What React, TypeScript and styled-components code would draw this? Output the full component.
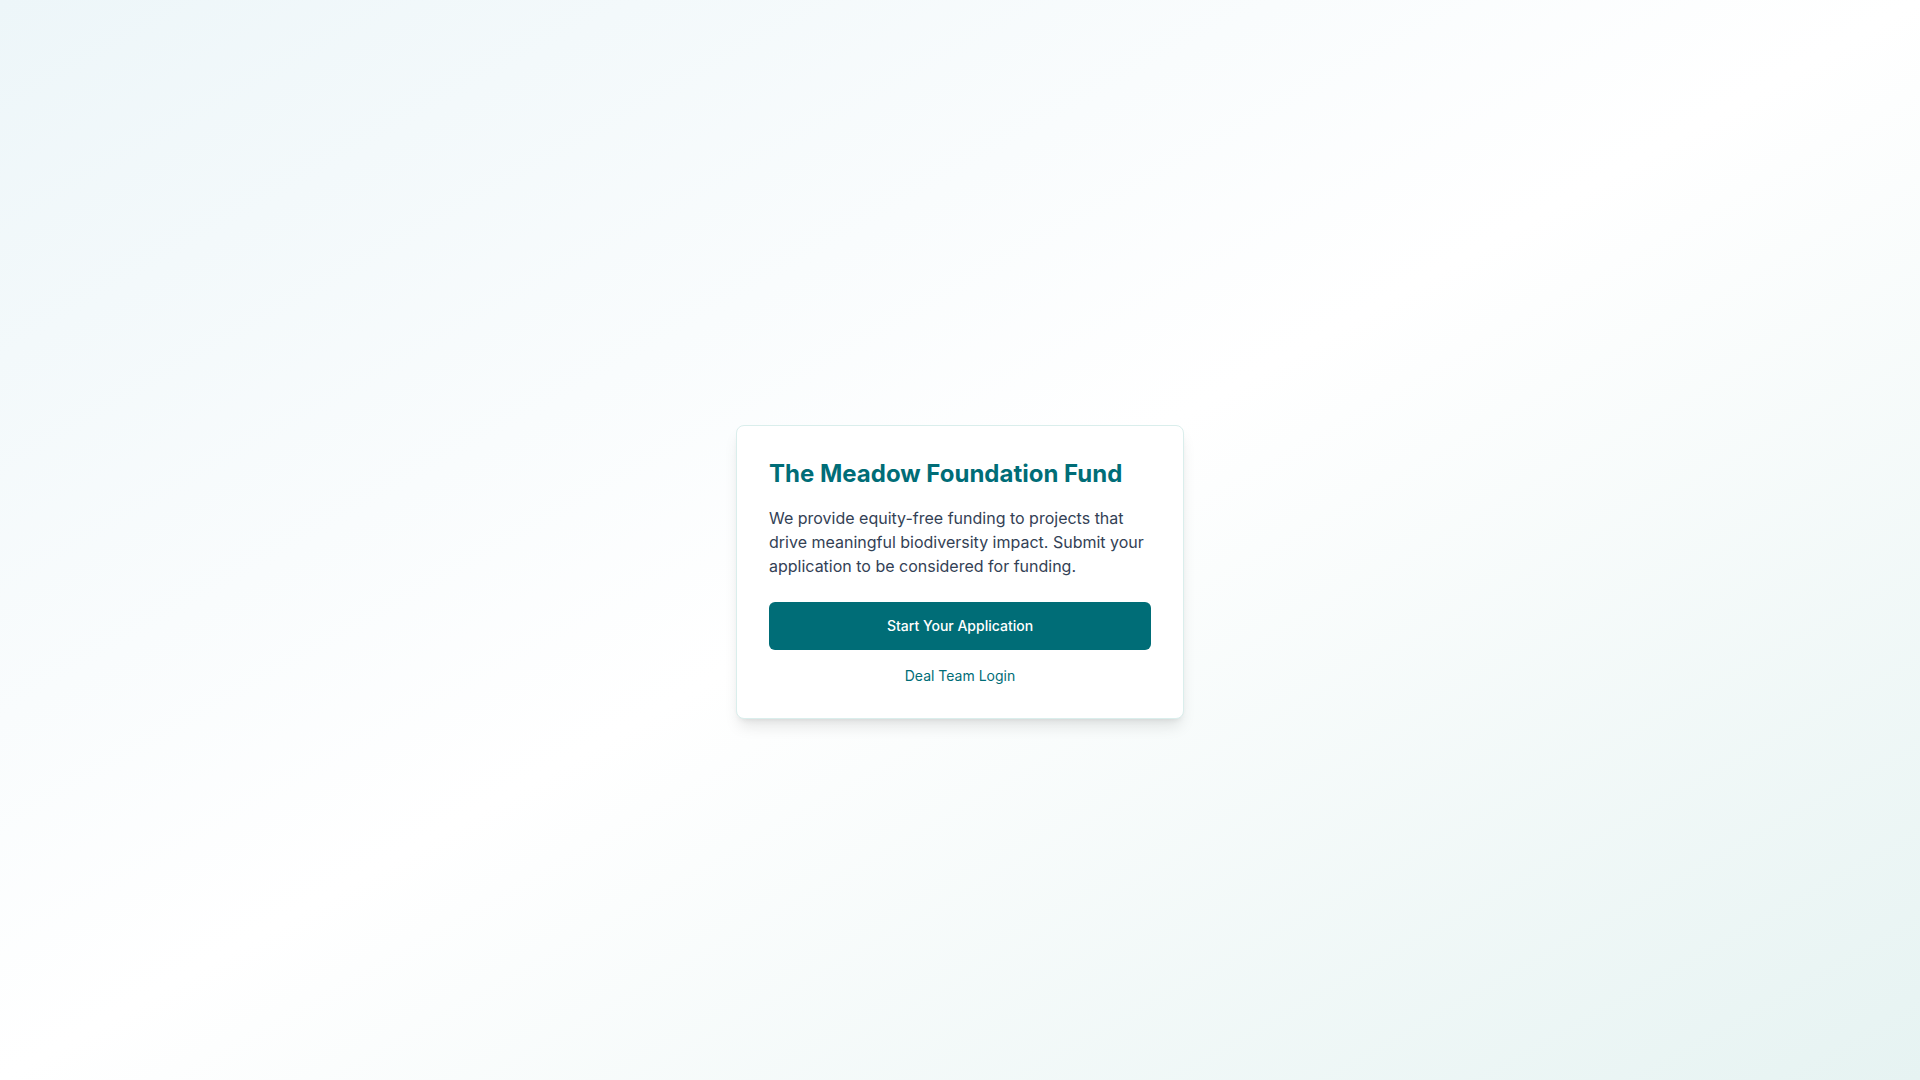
import React from 'react';
import styled, { createGlobalStyle } from 'styled-components';

const GlobalStyle = createGlobalStyle`
  *, *::before, *::after {
    box-sizing: border-box;
  }

  body {
    margin: 0;
    font-family: Inter, sans-serif;
  }
`;

const Page = styled.main`
  min-height: 100vh;
  display: flex;
  flex-direction: column;
  align-items: center;
  justify-content: center;
  padding: 128px 16px 64px;
  background: linear-gradient(to bottom right, #edf6f9, #ffffff, #e6f3f2);
`;

const Card = styled.section`
  width: 100%;
  max-width: 448px;
  padding: 32px;
  background: #ffffff;
  border: 1px solid #daeeec;
  border-radius: 8px;
  box-shadow:
    0 10px 15px -3px rgba(0, 0, 0, 0.1),
    0 4px 6px -4px rgba(0, 0, 0, 0.1);
`;

const Title = styled.h1`
  margin: 0 0 16px;
  color: #006d77;
  font-size: 24px;
  font-weight: 700;
  line-height: 32px;
`;

const Description = styled.p`
  margin: 0 0 24px;
  color: #334155;
  font-size: 16px;
  line-height: 24px;
`;

const Actions = styled.div`
  display: flex;
  flex-direction: column;
  gap: 16px;
`;

const StartButton = styled.button`
  height: 48px;
  padding: 0 16px;
  border: none;
  border-radius: 6px;
  background: #006d77;
  color: #ffffff;
  cursor: pointer;
  font-family: inherit;
  font-size: 14px;
  font-weight: 500;
  line-height: 20px;

  &:hover {
    background: #005a63;
  }
`;

const LoginLink = styled.a`
  align-self: center;
  color: #006d77;
  font-size: 14px;
  line-height: 20px;
  text-decoration: none;

  &:hover {
    text-decoration: underline;
  }
`;

export default function App() {
  return (
    <>
      <GlobalStyle />
      <Page>
        <Card>
          <Title>The Meadow Foundation Fund</Title>
          <Description>
            We provide equity-free funding to projects that drive meaningful biodiversity impact.
            Submit your application to be considered for funding.
          </Description>
          <Actions>
            <StartButton type="button">Start Your Application</StartButton>
            <LoginLink href="#login">Deal Team Login</LoginLink>
          </Actions>
        </Card>
      </Page>
    </>
  );
}
